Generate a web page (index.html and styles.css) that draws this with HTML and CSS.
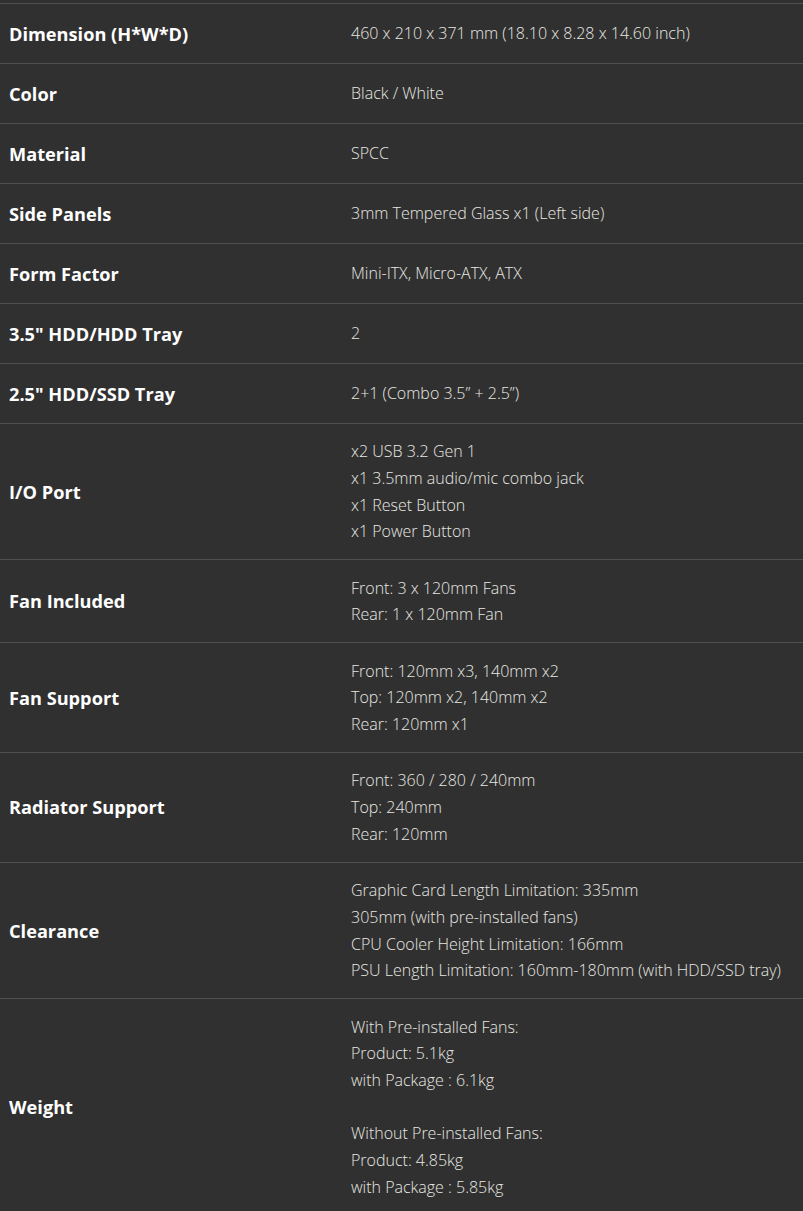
FILE: index.html
```html
<!DOCTYPE html>
<html lang="en">
<head>
<meta charset="utf-8">
<title>Specifications</title>
<link rel="stylesheet" href="styles.css">
</head>
<body>
<div class="specs">
  <div class="row"><div class="label">Dimension (H*W*D)</div><div class="value">460 x 210 x 371 mm (18.10 x 8.28 x 14.60 inch)</div></div>
  <div class="row"><div class="label">Color</div><div class="value">Black / White</div></div>
  <div class="row"><div class="label">Material</div><div class="value">SPCC</div></div>
  <div class="row"><div class="label">Side Panels</div><div class="value">3mm Tempered Glass x1 (Left side)</div></div>
  <div class="row"><div class="label">Form Factor</div><div class="value">Mini-ITX, Micro-ATX, ATX</div></div>
  <div class="row"><div class="label">3.5" HDD/HDD Tray</div><div class="value">2</div></div>
  <div class="row"><div class="label">2.5" HDD/SSD Tray</div><div class="value">2+1 (Combo 3.5” + 2.5”)</div></div>
  <div class="row"><div class="label">I/O Port</div><div class="value">x2 USB 3.2 Gen 1<br>x1 3.5mm audio/mic combo jack<br>x1 Reset Button<br>x1 Power Button</div></div>
  <div class="row"><div class="label">Fan Included</div><div class="value">Front: 3 x 120mm Fans<br>Rear: 1 x 120mm Fan</div></div>
  <div class="row"><div class="label">Fan Support</div><div class="value">Front: 120mm x3, 140mm x2<br>Top: 120mm x2, 140mm x2<br>Rear: 120mm x1</div></div>
  <div class="row"><div class="label">Radiator Support</div><div class="value">Front: 360 / 280 / 240mm<br>Top: 240mm<br>Rear: 120mm</div></div>
  <div class="row"><div class="label">Clearance</div><div class="value">Graphic Card Length Limitation: 335mm<br>305mm (with pre-installed fans)<br>CPU Cooler Height Limitation: 166mm<br>PSU Length Limitation: 160mm-180mm (with HDD/SSD tray)</div></div>
  <div class="row"><div class="label">Weight</div><div class="value">With Pre-installed Fans:<br>Product: 5.1kg<br>with Package : 6.1kg<br><br>Without Pre-installed Fans:<br>Product: 4.85kg<br>with Package : 5.85kg</div></div>
</div>
</body>
</html>
```
FILE: styles.css
```css
html, body {
  margin: 0;
  padding: 0;
  background: #303030;
}
.specs {
  padding-top: 3px;
  background: #303030;
  font-family: "Open Sans", "Noto Sans", sans-serif;
}
.row {
  display: grid;
  grid-template-columns: 342px 1fr;
  border-top: 1px solid #505050;
  min-height: 59px;
  align-items: center;
}
.label {
  padding: 0 9px;
  color: #ffffff;
  font-weight: 700;
  font-size: 18.2px;
}
.value {
  padding: 14.3px 9px;
  color: #e8e8e2;
  font-weight: 300;
  font-size: 16px;
  line-height: 26.7px;
}
```
